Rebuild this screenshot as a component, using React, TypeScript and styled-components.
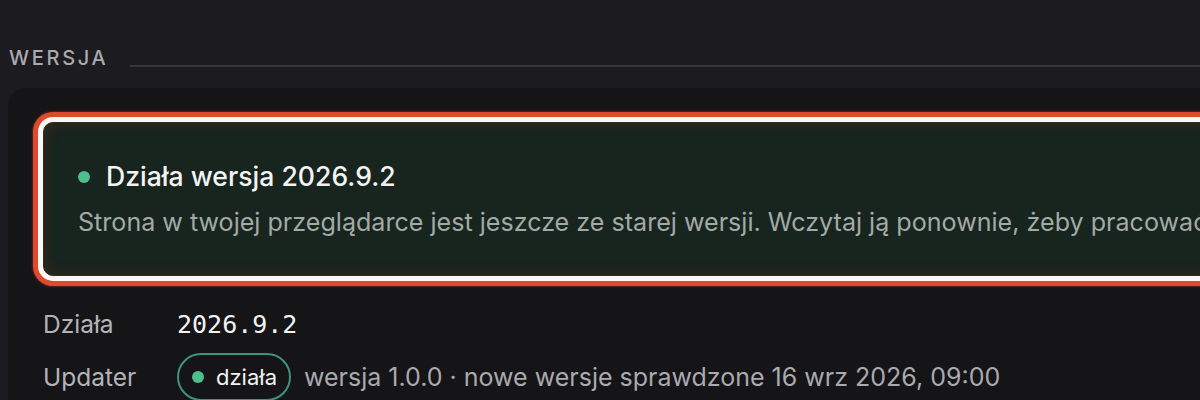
import styled, { createGlobalStyle } from "styled-components";

const GlobalStyle = createGlobalStyle`
  html, body {
    margin: 0;
    padding: 0;
    background: #1c1b20;
    overflow: hidden;
  }
  body {
    font-family: Inter, "Noto Sans", "Liberation Sans", sans-serif;
    color: #e8e8ea;
  }
`;

const Page = styled.div`
  width: 1700px;
  padding: 44px 0 0 8px;
  box-sizing: border-box;
`;

const SectionHeader = styled.div`
  display: flex;
  align-items: flex-end;
  gap: 21px;
  padding-left: 1px;
`;

const SectionTitle = styled.h2`
  margin: 0;
  font-size: 20px;
  line-height: 28px;
  font-weight: 500;
  letter-spacing: 0.135em;
  text-transform: uppercase;
  color: #a9a9ae;
`;

const Rule = styled.div`
  flex: 1;
  height: 2px;
  margin-bottom: 5px;
  background: #37363b;
`;

const Card = styled.section`
  margin-top: 16px;
  border-radius: 18px;
  background: #151417;
  padding: 34px 35px 40px;
`;

const Banner = styled.div<{ $focused?: boolean }>`
  border-radius: 10px;
  background: #18241e;
  border: 1px solid #35291f;
  padding: 38px 34px 36px;
  box-shadow: inset 0 0 14px rgba(200, 70, 40, 0.18)
    ${(p) =>
      p.$focused
        ? ", 0 0 0 5px #fbf7f4, 0 0 0 10px #e04a2c, 0 0 2px 11px rgba(224, 74, 44, 0.35)"
        : ""};
`;

const BannerTitle = styled.div`
  display: flex;
  align-items: center;
  gap: 16px;
  font-size: 26.6px;
  line-height: 31px;
  font-weight: 500;
  color: #f3f3f3;
`;

const Dot = styled.span<{ $size?: number }>`
  flex: none;
  width: ${(p) => p.$size ?? 12}px;
  height: ${(p) => p.$size ?? 12}px;
  border-radius: 50%;
  background: #4cbf8c;
`;

const BannerText = styled.p`
  margin: 14px 0 0;
  font-size: 25.1px;
  line-height: 33px;
  color: #a2aaa6;
  white-space: nowrap;
`;

const Details = styled.dl`
  display: grid;
  grid-template-columns: 134px 1fr;
  row-gap: 12px;
  align-items: center;
  margin: 32px 0 0;
`;

const Label = styled.dt`
  font-size: 24.5px;
  line-height: 33px;
  color: #b3b3b8;
`;

const Value = styled.dd`
  margin: 0;
  display: flex;
  align-items: center;
  gap: 13px;
  font-size: 25px;
  line-height: 33px;
  color: #a9a9ae;
`;

const Mono = styled.span`
  font-family: "DejaVu Sans Mono", "Liberation Mono", monospace;
  font-size: 25px;
  color: #f2f2f2;
`;

const Pill = styled.span`
  display: inline-flex;
  align-items: center;
  gap: 12px;
  height: 48px;
  box-sizing: border-box;
  padding: 0 12px 0 13px;
  border: 2px solid #3c9676;
  border-radius: 24px;
  font-size: 22px;
  color: #f2f2f2;
`;

export default function App() {
  return (
    <>
      <GlobalStyle />
      <Page>
        <SectionHeader>
          <SectionTitle>Wersja</SectionTitle>
          <Rule />
        </SectionHeader>
        <Card>
          <Banner $focused>
            <BannerTitle>
              <Dot $size={12} />
              Działa wersja 2026.9.2
            </BannerTitle>
            <BannerText>
              Strona w twojej przeglądarce jest jeszcze ze starej wersji.
              Wczytaj ją ponownie, żeby pracować na aktualnej.
            </BannerText>
          </Banner>
          <Details>
            <Label>Działa</Label>
            <Value>
              <Mono>2026.9.2</Mono>
            </Value>
            <Label>Updater</Label>
            <Value>
              <Pill>
                <Dot $size={12} />
                działa
              </Pill>
              wersja 1.0.0 · nowe wersje sprawdzone 16 wrz 2026, 09:00
            </Value>
          </Details>
        </Card>
      </Page>
    </>
  );
}
